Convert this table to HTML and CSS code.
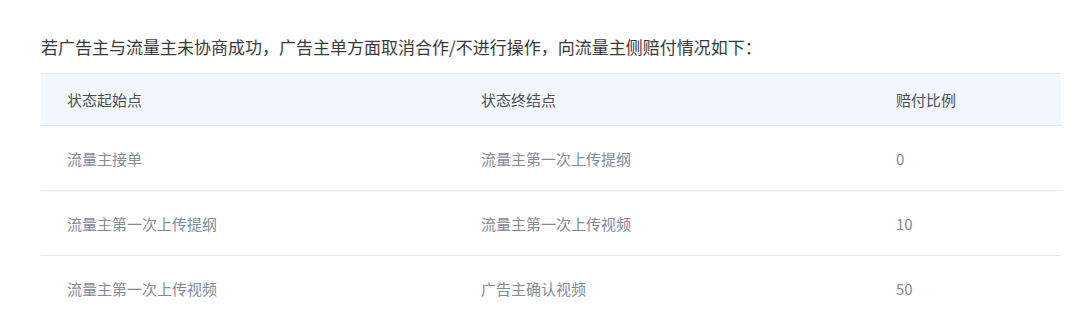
FILE: index.html
```html
<!DOCTYPE html>
<html lang="zh-CN">
<head>
<meta charset="utf-8">
<link rel="stylesheet" href="styles.css">
</head>
<body>
<div class="page">
  <p class="intro">若广告主与流量主未协商成功，广告主单方面取消合作/不进行操作，向流量主侧赔付情况如下：</p>
  <table class="comp-table">
    <colgroup>
      <col class="c1"><col class="c2"><col class="c3">
    </colgroup>
    <thead>
      <tr><th>状态起始点</th><th>状态终结点</th><th>赔付比例</th></tr>
    </thead>
    <tbody>
      <tr><td>流量主接单</td><td>流量主第一次上传提纲</td><td>0</td></tr>
      <tr><td>流量主第一次上传提纲</td><td>流量主第一次上传视频</td><td>10</td></tr>
      <tr><td>流量主第一次上传视频</td><td>广告主确认视频</td><td>50</td></tr>
    </tbody>
  </table>
</div>
</body>
</html>
```
FILE: styles.css
```css
html, body {
  margin: 0;
  padding: 0;
  background: #ffffff;
}
.page {
  padding: 35px 0 0 41px;
  width: 1020px;
  font-family: "Noto Sans CJK SC", "Noto Sans", sans-serif;
}
.intro {
  margin: 0;
  font-size: 17px;
  line-height: 24px;
  color: #3a3a3a;
}
.comp-table {
  margin-top: 14px;
  width: 1020px;
  border-collapse: collapse;
  table-layout: fixed;
  font-size: 15px;
}
.c1 { width: 414px; }
.c2 { width: 415px; }
.c3 { width: 191px; }
.comp-table th,
.comp-table td {
  text-align: left;
  padding: 0 0 0 26px;
  white-space: nowrap;
}
.comp-table thead tr {
  background: #f3f8fe;
  border-top: 1px solid #dfe7ef;
  border-bottom: 1px solid #dfe7ef;
}
.comp-table th {
  height: 51px;
  font-weight: normal;
  color: #4b5057;
}
.comp-table tbody tr {
  border-bottom: 1px solid #e4e7f0;
}
.comp-table td {
  height: 64px;
  color: #838a98;
}
```
